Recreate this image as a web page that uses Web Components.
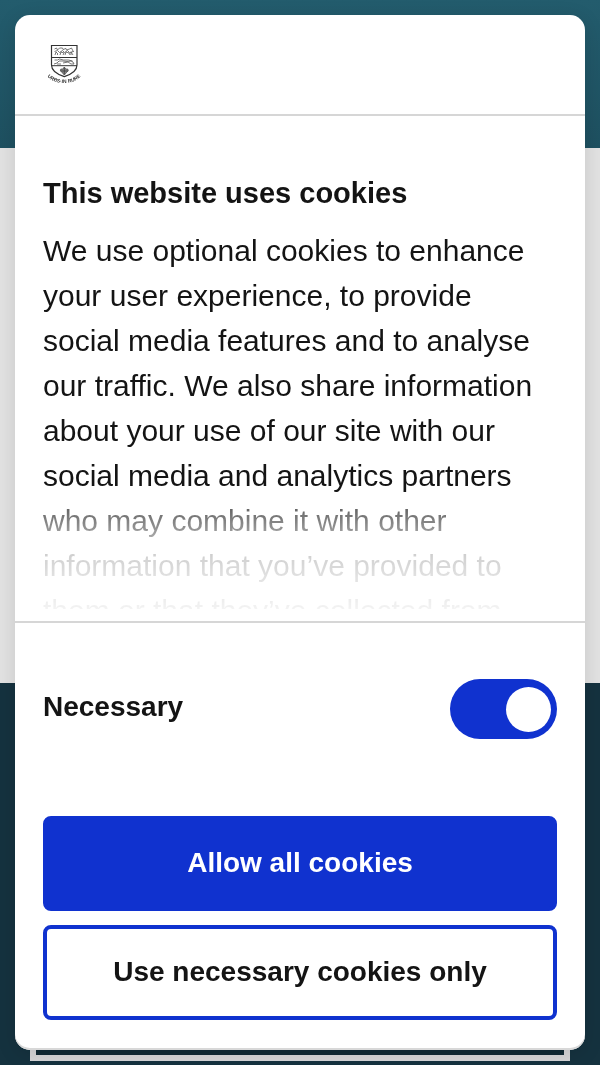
<!DOCTYPE html>
<html lang="en">
<head>
<meta charset="utf-8">
<meta name="viewport" content="width=device-width, initial-scale=1">
<title>Cookie consent</title>
<style>
    body {
        margin: 0;
        font-family: "Liberation Sans", Arial, sans-serif;
        color: #141414;
        overflow: hidden;
    }
</style>
</head>
<body>
<page-backdrop></page-backdrop>
<cookie-dialog>
    <council-crest slot="logo"></council-crest>
    <span slot="title">This website uses cookies</span>
    <span slot="text">We use optional cookies to enhance your user experience, to provide social media features and to analyse our traffic. We also share information about your use of our site with our social media and analytics partners who may combine it with other information that you’ve provided to them or that they’ve collected from</span>
    <toggle-switch slot="options" label="Necessary"></toggle-switch>
    <cookie-button slot="actions" variant="primary">Allow all cookies</cookie-button>
    <cookie-button slot="actions">Use necessary cookies only</cookie-button>
</cookie-dialog>

<script>
class PageBackdrop extends HTMLElement {
    constructor() {
        super();
        this.attachShadow({ mode: 'open' });
        this.shadowRoot.innerHTML = `
            <style>
                :host {
                    display: flex;
                    flex-direction: column;
                    height: 100vh;
                }
                header {
                    height: 148px;
                    background: linear-gradient(#235c6d, #1e5060);
                }
                main {
                    flex: 1;
                    background: #e2e2e2;
                }
                footer {
                    padding: 320px 30px 4px;
                    background: #15323f;
                }
                .panel {
                    height: 46px;
                    border: 6px solid #d6d6d8;
                    background: #102a35;
                }
            </style>
            <header></header>
            <main></main>
            <footer><div class="panel"></div></footer>
        `;
    }
}

class CouncilCrest extends HTMLElement {
    constructor() {
        super();
        this.attachShadow({ mode: 'open' });
        this.shadowRoot.innerHTML = `
            <style>
                :host {
                    display: block;
                }
                svg {
                    display: block;
                }
                text {
                    font: bold 5px "Liberation Sans", Arial, sans-serif;
                    fill: #333;
                    stroke: none;
                }
            </style>
            <svg width="36" height="41" viewBox="0 0 36 41" fill="none" stroke="#333" role="img" aria-label="Council crest">
                <path d="M5.5 1.500h25.500v19.500c0 6-5.500 9.300-12.700 11.600C11 30.300 5.500 27 5.500 21z" stroke-width="1.200"/>
                <path d="M5.500 13.500h25.500M5.500 21.700h25.500" stroke-width="1"/>
                <!-- beasts in the upper fields -->
                <g stroke-width=".8" stroke="#555">
                    <path d="M8.500 5l2-1 1 2 2-2h3l1 2 2-2 1 2 3-1 2-1 1 2 1 2M8.500 7.500l3-1 2 2 3-2 2 2 3-2 2 2 4-1M9 11l1-3 2 2-1 1M14 11l1-3 3 1-1 2M19 11l1-3 3 1 1 2M25 11v-3l2 3"/>
                    <path d="M8 20l3-1 2-2h4l4 .5 4-.5 2 1 1 2M8.500 16h3l2-1 4 1h5l4 1M11 20h4M17 19l5-1 3 2h3"/>
                </g>
                <!-- rose -->
                <path d="M18.300 23l1.500 2 2 0 .5 2-1.500 1-1.500 2-1 1-1-1-1.500-2-1.500-1 .5-2 2 0z" fill="#888" stroke-width=".6"/>
                <path d="M18.300 23.500v7M14.800 27h7" stroke-width=".7"/>
                <path id="ribbon" d="M1 32Q7 39 18 39Q29 39 35 32" stroke="none"/>
                <text text-anchor="middle"><textPath href="#ribbon" startOffset="50%">URBS·IN RURE</textPath></text>
            </svg>
        `;
    }
}

class ToggleSwitch extends HTMLElement {
    constructor() {
        super();
        this.attachShadow({ mode: 'open' });
        this.shadowRoot.innerHTML = `
            <style>
                :host {
                    display: flex;
                    align-items: center;
                    justify-content: space-between;
                }
                label {
                    font-size: 28px;
                    font-weight: bold;
                    line-height: 45px;
                    padding-bottom: 6px;
                }
                input {
                    appearance: none;
                    box-sizing: border-box;
                    display: flex;
                    align-items: center;
                    justify-content: flex-end;
                    width: 107px;
                    height: 60px;
                    margin: 0;
                    padding: 0 6px;
                    border-radius: 30px;
                    background: #1032cf;
                    cursor: pointer;
                }
                input::before {
                    content: '';
                    width: 45px;
                    height: 45px;
                    border-radius: 50%;
                    background: #fff;
                }
                input:not(:checked) {
                    justify-content: flex-start;
                    background: #d6d6d6;
                }
            </style>
            <label for="toggle"></label>
            <input type="checkbox" id="toggle" checked>
        `;
    }

    connectedCallback() {
        this.shadowRoot.querySelector('label').textContent = this.getAttribute('label');
    }
}

class CookieButton extends HTMLElement {
    constructor() {
        super();
        this.attachShadow({ mode: 'open' });
        this.shadowRoot.innerHTML = `
            <style>
                :host {
                    display: block;
                }
                button {
                    display: block;
                    width: 100%;
                    height: 95px;
                    padding: 0 16px 2px;
                    border: 4px solid #1032cf;
                    border-radius: 8px;
                    background: #fff;
                    color: inherit;
                    font: bold 28px "Liberation Sans", Arial, sans-serif;
                    cursor: pointer;
                }
                :host([variant="primary"]) button {
                    background: #1032cf;
                    color: #fff;
                }
            </style>
            <button type="button"><slot></slot></button>
        `;
        this.shadowRoot.querySelector('button').addEventListener('click', () => {
            this.dispatchEvent(new CustomEvent('consent', { bubbles: true }));
        });
    }
}

class CookieDialog extends HTMLElement {
    constructor() {
        super();
        this.attachShadow({ mode: 'open' });
        this.shadowRoot.innerHTML = `
            <style>
                :host {
                    position: fixed;
                    inset: 15px;
                    display: flex;
                    flex-direction: column;
                    overflow: hidden;
                    border-radius: 15px;
                    background: #fff;
                    box-shadow: inset 0 -2px #d8d8d8, 0 4px 20px rgba(0, 0, 0, 0.12);
                }
                header {
                    display: flex;
                    padding: 29px 31px;
                    border-bottom: 2px solid #d6d6d6;
                }
                .content {
                    flex: 1;
                    min-height: 0;
                    box-sizing: border-box;
                    padding: 0 28px 12px;
                    border-bottom: 2px solid #d6d6d6;
                }
                .scroller {
                    height: 100%;
                    box-sizing: border-box;
                    padding: 55px 14px 0 0;
                    overflow: hidden;
                    mask-image: linear-gradient(to top,
                        rgba(0, 0, 0, 0.05),
                        rgba(0, 0, 0, 0.12) 30px,
                        rgba(0, 0, 0, 0.2) 54px,
                        rgba(0, 0, 0, 0.45) 80px,
                        rgba(0, 0, 0, 0.65) 100px,
                        #000 118px);
                }
                h2 {
                    margin: 0 0 12px;
                    font-size: 29px;
                    line-height: 45px;
                }
                p {
                    margin: 0;
                    font-size: 30px;
                    line-height: 45px;
                }
                .options {
                    padding: 56px 28px 77px;
                }
                .actions {
                    display: flex;
                    flex-direction: column;
                    gap: 14px;
                    padding: 0 28px 30px;
                }
            </style>
            <header><slot name="logo"></slot></header>
            <div class="content">
                <div class="scroller">
                    <h2><slot name="title"></slot></h2>
                    <p><slot name="text"></slot></p>
                </div>
            </div>
            <div class="options"><slot name="options"></slot></div>
            <div class="actions"><slot name="actions"></slot></div>
        `;
    }

    connectedCallback() {
        this.setAttribute('role', 'dialog');
        this.addEventListener('consent', () => this.remove());
    }
}

customElements.define('page-backdrop', PageBackdrop);
customElements.define('council-crest', CouncilCrest);
customElements.define('toggle-switch', ToggleSwitch);
customElements.define('cookie-button', CookieButton);
customElements.define('cookie-dialog', CookieDialog);
</script>
</body>
</html>
